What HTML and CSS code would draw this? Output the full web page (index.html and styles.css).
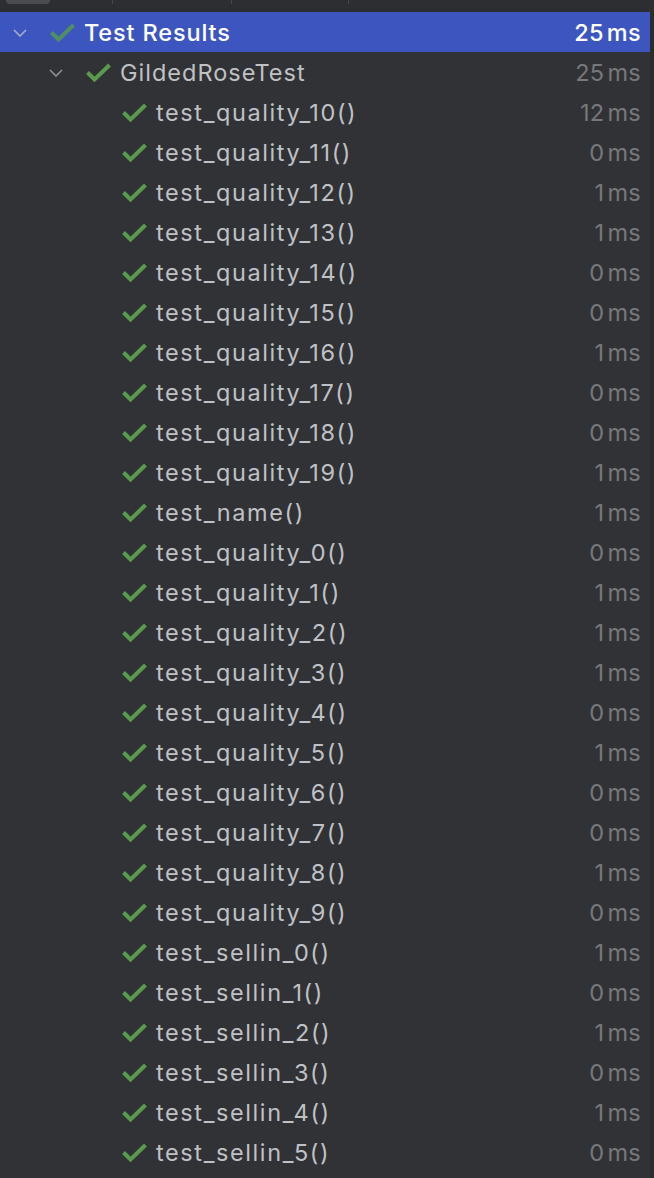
FILE: index.html
```html
<!DOCTYPE html>
<html>
<head>
<meta charset="utf-8">
<link rel="stylesheet" href="styles.css">
</head>
<body>
<div class="frame">
  <div class="topstrip">
    <div class="tab"></div>
    <div class="sep s1"></div>
    <div class="sep s2"></div>
    <div class="sep s3"></div>
  </div>
  <div class="panel">
    <div class="tree">
      <div class="row selected d0">
        <span class="chev"><svg width="14" height="8" viewBox="0 0 14 8"><path d="M1 1 L7 7 L13 1" fill="none" stroke="currentColor" stroke-width="1.6"/></svg></span>
        <svg class="check" width="25" height="19" viewBox="0 0 25 19"><path d="M1.5 9.5 L8.5 16.5 L23.5 2" fill="none" stroke="currentColor" stroke-width="4"/></svg>
        <span class="name">Test Results</span>
        <span class="time">25<span class="unit">ms</span></span>
      </div>
      <div class="row d1">
        <span class="chev"><svg width="14" height="8" viewBox="0 0 14 8"><path d="M1 1 L7 7 L13 1" fill="none" stroke="currentColor" stroke-width="1.6"/></svg></span>
        <svg class="check" width="25" height="19" viewBox="0 0 25 19"><path d="M1.5 9.5 L8.5 16.5 L23.5 2" fill="none" stroke="currentColor" stroke-width="4"/></svg>
        <span class="name">GildedRoseTest</span>
        <span class="time">25<span class="unit">ms</span></span>
      </div>
      <div class="row d2"><span class="chev"></span><svg class="check" width="25" height="19" viewBox="0 0 25 19"><path d="M1.5 9.5 L8.5 16.5 L23.5 2" fill="none" stroke="currentColor" stroke-width="4"/></svg><span class="name">test_quality_10()</span><span class="time">12<span class="unit">ms</span></span></div>
      <div class="row d2"><span class="chev"></span><svg class="check" width="25" height="19" viewBox="0 0 25 19"><path d="M1.5 9.5 L8.5 16.5 L23.5 2" fill="none" stroke="currentColor" stroke-width="4"/></svg><span class="name">test_quality_11()</span><span class="time">0<span class="unit">ms</span></span></div>
      <div class="row d2"><span class="chev"></span><svg class="check" width="25" height="19" viewBox="0 0 25 19"><path d="M1.5 9.5 L8.5 16.5 L23.5 2" fill="none" stroke="currentColor" stroke-width="4"/></svg><span class="name">test_quality_12()</span><span class="time">1<span class="unit">ms</span></span></div>
      <div class="row d2"><span class="chev"></span><svg class="check" width="25" height="19" viewBox="0 0 25 19"><path d="M1.5 9.5 L8.5 16.5 L23.5 2" fill="none" stroke="currentColor" stroke-width="4"/></svg><span class="name">test_quality_13()</span><span class="time">1<span class="unit">ms</span></span></div>
      <div class="row d2"><span class="chev"></span><svg class="check" width="25" height="19" viewBox="0 0 25 19"><path d="M1.5 9.5 L8.5 16.5 L23.5 2" fill="none" stroke="currentColor" stroke-width="4"/></svg><span class="name">test_quality_14()</span><span class="time">0<span class="unit">ms</span></span></div>
      <div class="row d2"><span class="chev"></span><svg class="check" width="25" height="19" viewBox="0 0 25 19"><path d="M1.5 9.5 L8.5 16.5 L23.5 2" fill="none" stroke="currentColor" stroke-width="4"/></svg><span class="name">test_quality_15()</span><span class="time">0<span class="unit">ms</span></span></div>
      <div class="row d2"><span class="chev"></span><svg class="check" width="25" height="19" viewBox="0 0 25 19"><path d="M1.5 9.5 L8.5 16.5 L23.5 2" fill="none" stroke="currentColor" stroke-width="4"/></svg><span class="name">test_quality_16()</span><span class="time">1<span class="unit">ms</span></span></div>
      <div class="row d2"><span class="chev"></span><svg class="check" width="25" height="19" viewBox="0 0 25 19"><path d="M1.5 9.5 L8.5 16.5 L23.5 2" fill="none" stroke="currentColor" stroke-width="4"/></svg><span class="name">test_quality_17()</span><span class="time">0<span class="unit">ms</span></span></div>
      <div class="row d2"><span class="chev"></span><svg class="check" width="25" height="19" viewBox="0 0 25 19"><path d="M1.5 9.5 L8.5 16.5 L23.5 2" fill="none" stroke="currentColor" stroke-width="4"/></svg><span class="name">test_quality_18()</span><span class="time">0<span class="unit">ms</span></span></div>
      <div class="row d2"><span class="chev"></span><svg class="check" width="25" height="19" viewBox="0 0 25 19"><path d="M1.5 9.5 L8.5 16.5 L23.5 2" fill="none" stroke="currentColor" stroke-width="4"/></svg><span class="name">test_quality_19()</span><span class="time">1<span class="unit">ms</span></span></div>
      <div class="row d2"><span class="chev"></span><svg class="check" width="25" height="19" viewBox="0 0 25 19"><path d="M1.5 9.5 L8.5 16.5 L23.5 2" fill="none" stroke="currentColor" stroke-width="4"/></svg><span class="name">test_name()</span><span class="time">1<span class="unit">ms</span></span></div>
      <div class="row d2"><span class="chev"></span><svg class="check" width="25" height="19" viewBox="0 0 25 19"><path d="M1.5 9.5 L8.5 16.5 L23.5 2" fill="none" stroke="currentColor" stroke-width="4"/></svg><span class="name">test_quality_0()</span><span class="time">0<span class="unit">ms</span></span></div>
      <div class="row d2"><span class="chev"></span><svg class="check" width="25" height="19" viewBox="0 0 25 19"><path d="M1.5 9.5 L8.5 16.5 L23.5 2" fill="none" stroke="currentColor" stroke-width="4"/></svg><span class="name">test_quality_1()</span><span class="time">1<span class="unit">ms</span></span></div>
      <div class="row d2"><span class="chev"></span><svg class="check" width="25" height="19" viewBox="0 0 25 19"><path d="M1.5 9.5 L8.5 16.5 L23.5 2" fill="none" stroke="currentColor" stroke-width="4"/></svg><span class="name">test_quality_2()</span><span class="time">1<span class="unit">ms</span></span></div>
      <div class="row d2"><span class="chev"></span><svg class="check" width="25" height="19" viewBox="0 0 25 19"><path d="M1.5 9.5 L8.5 16.5 L23.5 2" fill="none" stroke="currentColor" stroke-width="4"/></svg><span class="name">test_quality_3()</span><span class="time">1<span class="unit">ms</span></span></div>
      <div class="row d2"><span class="chev"></span><svg class="check" width="25" height="19" viewBox="0 0 25 19"><path d="M1.5 9.5 L8.5 16.5 L23.5 2" fill="none" stroke="currentColor" stroke-width="4"/></svg><span class="name">test_quality_4()</span><span class="time">0<span class="unit">ms</span></span></div>
      <div class="row d2"><span class="chev"></span><svg class="check" width="25" height="19" viewBox="0 0 25 19"><path d="M1.5 9.5 L8.5 16.5 L23.5 2" fill="none" stroke="currentColor" stroke-width="4"/></svg><span class="name">test_quality_5()</span><span class="time">1<span class="unit">ms</span></span></div>
      <div class="row d2"><span class="chev"></span><svg class="check" width="25" height="19" viewBox="0 0 25 19"><path d="M1.5 9.5 L8.5 16.5 L23.5 2" fill="none" stroke="currentColor" stroke-width="4"/></svg><span class="name">test_quality_6()</span><span class="time">0<span class="unit">ms</span></span></div>
      <div class="row d2"><span class="chev"></span><svg class="check" width="25" height="19" viewBox="0 0 25 19"><path d="M1.5 9.5 L8.5 16.5 L23.5 2" fill="none" stroke="currentColor" stroke-width="4"/></svg><span class="name">test_quality_7()</span><span class="time">0<span class="unit">ms</span></span></div>
      <div class="row d2"><span class="chev"></span><svg class="check" width="25" height="19" viewBox="0 0 25 19"><path d="M1.5 9.5 L8.5 16.5 L23.5 2" fill="none" stroke="currentColor" stroke-width="4"/></svg><span class="name">test_quality_8()</span><span class="time">1<span class="unit">ms</span></span></div>
      <div class="row d2"><span class="chev"></span><svg class="check" width="25" height="19" viewBox="0 0 25 19"><path d="M1.5 9.5 L8.5 16.5 L23.5 2" fill="none" stroke="currentColor" stroke-width="4"/></svg><span class="name">test_quality_9()</span><span class="time">0<span class="unit">ms</span></span></div>
      <div class="row d2"><span class="chev"></span><svg class="check" width="25" height="19" viewBox="0 0 25 19"><path d="M1.5 9.5 L8.5 16.5 L23.5 2" fill="none" stroke="currentColor" stroke-width="4"/></svg><span class="name">test_sellin_0()</span><span class="time">1<span class="unit">ms</span></span></div>
      <div class="row d2"><span class="chev"></span><svg class="check" width="25" height="19" viewBox="0 0 25 19"><path d="M1.5 9.5 L8.5 16.5 L23.5 2" fill="none" stroke="currentColor" stroke-width="4"/></svg><span class="name">test_sellin_1()</span><span class="time">0<span class="unit">ms</span></span></div>
      <div class="row d2"><span class="chev"></span><svg class="check" width="25" height="19" viewBox="0 0 25 19"><path d="M1.5 9.5 L8.5 16.5 L23.5 2" fill="none" stroke="currentColor" stroke-width="4"/></svg><span class="name">test_sellin_2()</span><span class="time">1<span class="unit">ms</span></span></div>
      <div class="row d2"><span class="chev"></span><svg class="check" width="25" height="19" viewBox="0 0 25 19"><path d="M1.5 9.5 L8.5 16.5 L23.5 2" fill="none" stroke="currentColor" stroke-width="4"/></svg><span class="name">test_sellin_3()</span><span class="time">0<span class="unit">ms</span></span></div>
      <div class="row d2"><span class="chev"></span><svg class="check" width="25" height="19" viewBox="0 0 25 19"><path d="M1.5 9.5 L8.5 16.5 L23.5 2" fill="none" stroke="currentColor" stroke-width="4"/></svg><span class="name">test_sellin_4()</span><span class="time">1<span class="unit">ms</span></span></div>
      <div class="row d2"><span class="chev"></span><svg class="check" width="25" height="19" viewBox="0 0 25 19"><path d="M1.5 9.5 L8.5 16.5 L23.5 2" fill="none" stroke="currentColor" stroke-width="4"/></svg><span class="name">test_sellin_5()</span><span class="time">0<span class="unit">ms</span></span></div>
    </div>
    <div class="scrollgutter"></div>
  </div>
</div>
</body>
</html>
```
FILE: styles.css
```css
html, body {
  margin: 0;
  padding: 0;
  background: #313235;
}
.frame {
  width: 654px;
  height: 1178px;
  overflow: hidden;
  display: flex;
  flex-direction: column;
  font-family: Inter, "Noto Sans", sans-serif;
}
.topstrip {
  height: 12px;
  flex: none;
  background: #2d2e31;
  position: relative;
}
.tab {
  position: absolute;
  left: 6px;
  top: 0;
  width: 44px;
  height: 4px;
  background: #4a4c50;
  border-radius: 0 0 4px 4px;
}
.sep {
  position: absolute;
  top: 0;
  width: 1px;
  height: 4px;
  background: #45474b;
}
.s1 { left: 112px; }
.s2 { left: 231px; }
.s3 { left: 348px; }
.panel {
  flex: 1;
  display: flex;
  background: #313235;
}
.tree {
  flex: 1;
  display: flex;
  flex-direction: column;
}
.scrollgutter {
  width: 4px;
  flex: none;
  background: #2b2c2f;
}
.row {
  height: 40px;
  display: flex;
  align-items: center;
  padding-right: 9px;
  padding-top: 1px;
  box-sizing: border-box;
  font-size: 23.5px;
  color: #bfc1c5;
  white-space: nowrap;
}
.d0 { padding-left: 13px; }
.d1 { padding-left: 49px; }
.d2 { padding-left: 85px; }
.chev {
  width: 37px;
  flex: none;
  display: flex;
  align-items: center;
  color: #8e9095;
}
.check {
  flex: none;
  color: #5a9a4c;
  margin-right: 9px;
}
.name {
  flex: none;
  letter-spacing: 1.6px;
}
.d1 .name {
  letter-spacing: 1.0px;
}
.time {
  margin-left: auto;
  color: #76787c;
  letter-spacing: 0.3px;
}
.unit {
  margin-left: 3px;
}
.selected {
  background: #3d56bf;
  color: #ffffff;
}
.selected .name {
  font-weight: 500;
  letter-spacing: 0.85px;
}
.selected .time {
  color: #ffffff;
  font-weight: 500;
}
.selected .chev {
  color: #a5acc8;
}
.selected .check {
  color: #4f8f62;
}
```
